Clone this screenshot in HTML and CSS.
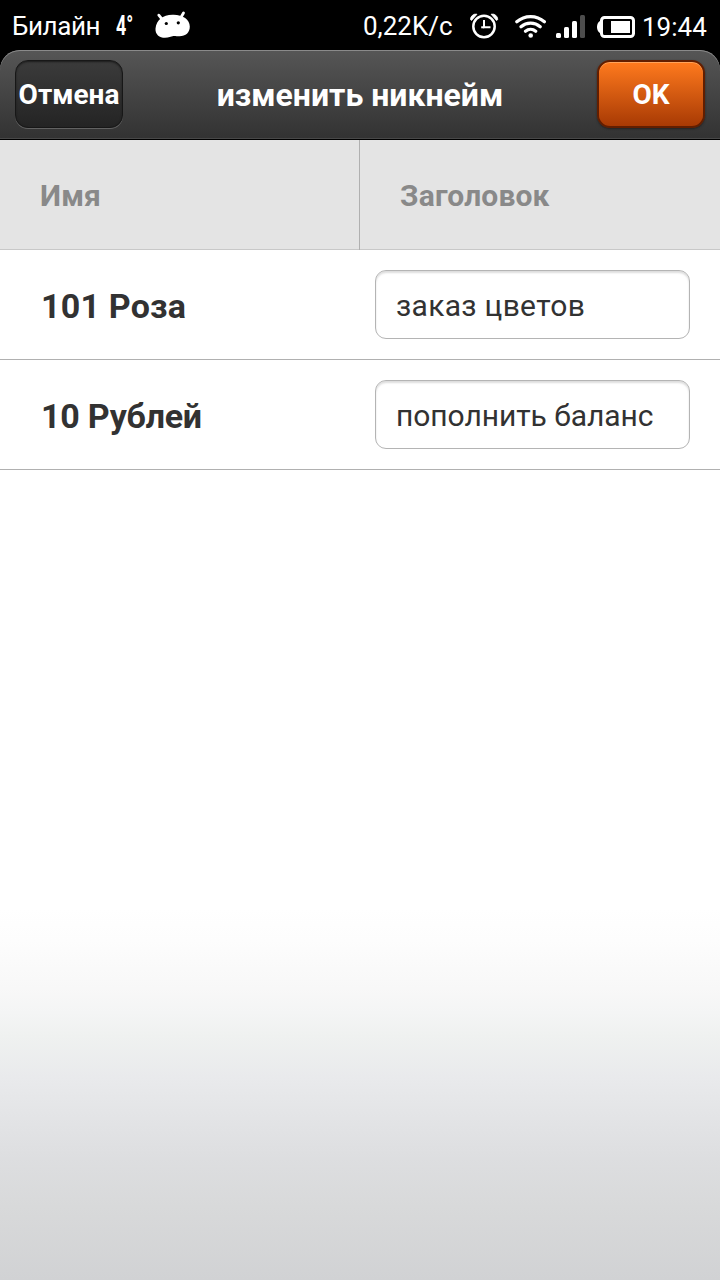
FILE: index.html
```html
<!DOCTYPE html>
<html lang="ru">
<head>
<meta charset="utf-8">
<title>изменить никнейм</title>
<link rel="stylesheet" href="styles.css">
</head>
<body>
<div class="screen">
  <div class="status">
    <span class="carrier">Билайн</span>
    <span class="temp">4°</span>
    <svg class="droid" width="36" height="28" viewBox="0 0 36 28">
      <path d="M3.800 4.200l4 5M28.500 2l-3.500 6" stroke="#fff" stroke-width="2.800" stroke-linecap="round"/>
      <path d="M.5 17.500C1.500 9 7.500 4.200 17.500 3.800S34.800 8.500 34.800 15.500c0 6-4 9.800-10.300 9.800-2.500 0-4-.4-6-.3-3 .3-4.500 1.800-8.500 1.800C4.500 26.800 0 23.500.5 17.500z" fill="#fff"/>
      <circle cx="11.300" cy="12.500" r="1.600"/><circle cx="23.300" cy="11.800" r="1.600"/>
    </svg>
    <span class="speed">0,22K/с</span>
    <svg class="alarm" width="30" height="26" viewBox="0 0 30 26" fill="none" stroke="#fff">
      <circle cx="14" cy="13.500" r="10.700" stroke-width="2.500"/>
      <path d="M14 7v7.300h6.500" stroke-width="2"/>
      <path d="M11.200 14.300h3" stroke-width="2"/>
      <path d="M.4 6.500A5.500 5.500 0 0 1 7 1.200L1.500 7.500zM27.800 6.500A5.500 5.500 0 0 0 21.100 1.200L26.500 7.500z" fill="#fff" stroke="#fff" stroke-width=".8"/>
    </svg>
    <svg class="wifi" width="34" height="26" viewBox="0 0 34 26" fill="none" stroke="#fff" stroke-width="3.200" stroke-linecap="round">
      <path d="M1.800 8.800a21 21 0 0 1 27.600 0M6 13.700a14.800 14.800 0 0 1 19.200 0M10.500 18.200a8 8 0 0 1 10.200 0"/>
      <circle cx="15.700" cy="22.500" r="2.300" fill="#fff" stroke="none"/>
    </svg>
    <svg class="signal" width="30" height="24" viewBox="0 0 30 24" fill="#fff">
      <rect x="0" y="18" width="5" height="5" rx="1.500"/><rect x="8" y="12" width="5" height="11" rx="1.500"/><rect x="16" y="6" width="5" height="17" rx="1.500"/><rect x="24" y="0" width="5" height="23" rx="1.500" fill="#4d4d4d"/>
    </svg>
    <svg class="battery" width="38" height="22" viewBox="0 0 38 22">
      <path d="M4.500 4.500C1.500 5 0 8 0 11s1.500 6 4.500 6.500z" fill="#fff"/>
      <rect x="4.500" y="1.500" width="32" height="19" rx="3" fill="none" stroke="#fff" stroke-width="3"/>
      <rect x="14" y="5" width="19" height="12" fill="#fff"/>
    </svg>
    <span class="clock">19:44</span>
  </div>
  <header class="titlebar">
    <button class="btn cancel"><span>Отмена</span></button>
    <h1 class="title">изменить никнейм</h1>
    <button class="btn ok"><span>OK</span></button>
  </header>
  <div class="row head"><div class="cell name"><span>Имя</span></div><div class="cell label"><span>Заголовок</span></div></div>
  <div class="row"><div class="name"><span class="rose">101 Роза</span></div><div class="field"><span class="order">заказ цветов</span></div></div>
  <div class="row"><div class="name"><span class="rub">10 Рублей</span></div><div class="field"><span class="topup">пополнить баланс</span></div></div>
  <div class="rest"></div>
</div>
</body>
</html>
```
FILE: styles.css
```css
* { box-sizing: border-box; }
body { margin: 0; background: #000; font-family: Roboto, "Noto Sans", sans-serif; }
.screen { width: 720px; height: 1280px; display: flex; flex-direction: column; overflow: hidden; background: #000; }
.status { height: 50px; display: flex; align-items: flex-start; padding-left: 12px; color: #fff; font-size: 26px; line-height: 52px; white-space: nowrap; }
.status svg { flex: none; display: block; }
.carrier { width: 104px; flex: none; letter-spacing: -0.4px; }
.temp { width: 39px; flex: none; font-size: 28px; line-height: 51px; font-weight: 700; transform: scaleX(.64); transform-origin: left; }
.droid { margin-top: 11px; }
.speed { width: 107px; margin-left: 172px; flex: none; }
.alarm { margin-top: 13px; }
.wifi { margin: 13px 0 0 15px; }
.signal { margin: 15px 0 0 7px; }
.battery { margin: 16px 0 0 11px; }
.clock { margin-left: 7px; line-height: 54px; }
.titlebar { height: 90px; flex: none; display: flex; justify-content: space-between; padding: 10px 15px 0 15px; border-radius: 20px 20px 0 0; background: linear-gradient(#565656, #323232); border-bottom: 1px solid #000; box-shadow: inset 0 1px 0 #8a8a8a, inset 0 -1px 0 #484848; }
.btn { height: 68px; border-radius: 13px; color: #fff; font: 700 28px/66px Roboto, "Noto Sans", sans-serif; padding: 0; white-space: nowrap; display: flex; justify-content: center; }
.cancel { width: 108px; border: 1px solid #171717; line-height: 67px; background: linear-gradient(#3b3b3b, #242424); box-shadow: inset 0 1px 2px #1c1c1c, 0 1px 0 #626262; }
.ok { width: 108px; border: 2px solid #621e00; background: linear-gradient(#ff7a1e, #a83a04); box-shadow: inset 0 1px 0 #ffa45c, 0 1px 2px #222; }
.title { margin: 0; font-size: 32px; line-height: 70px; font-weight: 700; color: #fff; white-space: nowrap; }
.row { height: 110px; flex: none; display: flex; background: #fff; border-bottom: 1px solid #b0b0b0; color: #323232; align-items: center; padding-right: 30px; }
.name { width: 375px; padding: 2px 0 0 41px; font-size: 34px; line-height: 40px; font-weight: 700; }
.rose { letter-spacing: 0.2px; }
.rub { letter-spacing: -0.25px; }
.head { background: #e4e4e4; border-color: #c8c8c8; color: #898989; padding: 0; }
.cell { font-size: 30px; line-height: 109px; font-weight: 700; padding: 2px 0 0 40px; letter-spacing: 0.15px; }
.head .name { width: 360px; height: 110px; border-right: 1px solid #b0b0b0; padding: 0 0 0 40px; line-height: 111px; font-size: 30px; }
.field { flex: 1; height: 69px; border: 1px solid #b4b4b4; border-radius: 11px; box-shadow: inset 0 2px 2px #ddd; padding-left: 20px; font-size: 30px; line-height: 70px; white-space: nowrap; }
.order { letter-spacing: 0.3px; }
.topup { letter-spacing: -0.05px; }
.rest { flex: 1; background: linear-gradient(#fff 54%, #fdfdfd 58%, #f8f8f8 64%, #f4f5f5 67%, #eff1f0 70%, #e9eaec 75%, #e3e4e6 80%, #dddee0 85%, #d8d9da 91%, #d1d2d4 100%); }
```
